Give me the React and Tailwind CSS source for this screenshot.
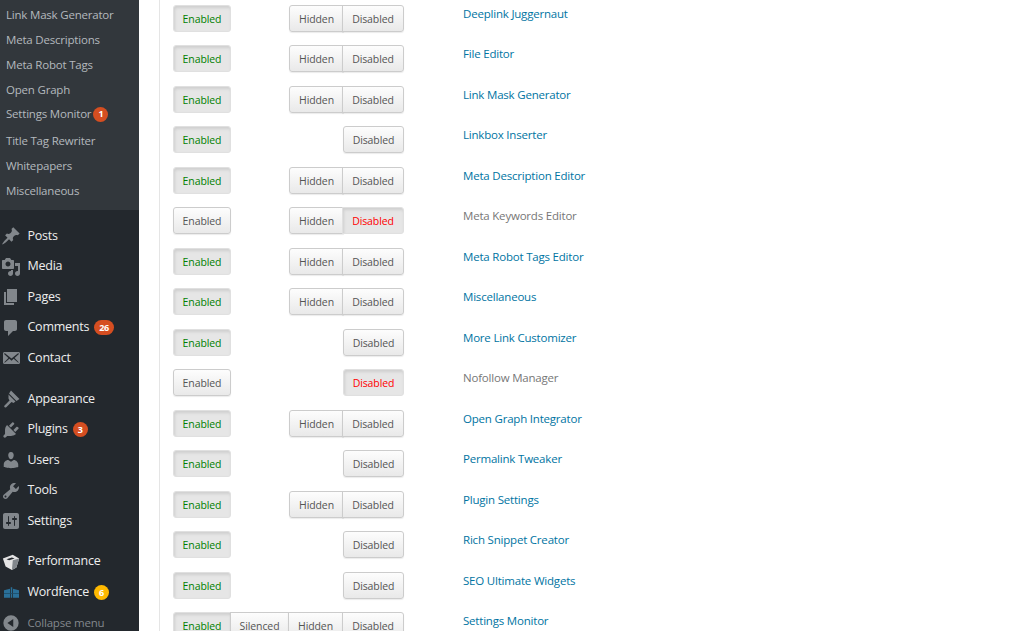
const subItems = [
  { label: 'Link Mask Generator' },
  { label: 'Meta Descriptions' },
  { label: 'Meta Robot Tags' },
  { label: 'Open Graph' },
  { label: 'Settings Monitor', badge: '1' },
  { label: 'Title Tag Rewriter' },
  { label: 'Whitepapers' },
  { label: 'Miscellaneous' },
];

// wp admin menu glyphs
const paths = {
  posts:
    'M10.44 3.02l1.82-1.82 6.36 6.35-1.83 1.82c-1.05-.68-2.48-.57-3.41.36l-.75.75c-.92.93-1.04 2.35-.35 3.41l-1.83 1.82-2.41-2.41-2.8 2.79c-.42.42-3.38 2.71-3.8 2.29s1.86-3.39 2.28-3.81l2.79-2.79L4.1 9.36l1.83-1.82c1.05.69 2.48.57 3.4-.36l.75-.75c.93-.92 1.05-2.35.36-3.41z',
  media:
    'M13 11V4c0-.55-.45-1-1-1h-1.67L9 1H5L3.67 3H2c-.55 0-1 .45-1 1v7c0 .55.45 1 1 1h10c.55 0 1-.45 1-1zM7 4.5c1.38 0 2.5 1.12 2.5 2.5S8.38 9.5 7 9.5 4.5 8.38 4.5 7 5.62 4.5 7 4.5zM14 6h5v10.5c0 1.38-1.12 2.5-2.5 2.5S14 17.88 14 16.5s1.12-2.5 2.5-2.5c.17 0 .34.02.5.05V9h-3V6zm-4 8.05V13h2v3.5c0 1.38-1.12 2.5-2.5 2.5S7 17.88 7 16.5 8.12 14 9.5 14c.17 0 .34.02.5.05z',
  pages: 'M6 15V2h10v13H6zm-1 1h8v2H3V5h2v11z',
  comments:
    'M5 2h9c1.1 0 2 .9 2 2v7c0 1.1-.9 2-2 2h-2l-5 5v-5H5c-1.1 0-2-.9-2-2V4c0-1.1.9-2 2-2z',
  contact:
    'M19 14.5v-9c0-.83-.67-1.5-1.5-1.5H3.49c-.83 0-1.5.67-1.5 1.5v9c0 .83.67 1.5 1.5 1.5H17.5c.83 0 1.5-.67 1.5-1.5zm-1.31-9.11c.33.33.15.67-.03.84L13.6 9.95l3.9 4.06c.12.14.2.36.06.51-.13.16-.43.15-.56.05l-4.37-3.73-2.14 1.95-2.13-1.95-4.37 3.73c-.13.1-.43.11-.56-.05-.14-.15-.06-.37.06-.51l3.9-4.06-4.06-3.72c-.18-.17-.36-.51-.03-.84s.67-.17.95.07l6.24 5.04 6.25-5.04c.28-.24.62-.4.95-.07z',
  appearance:
    'M10 1.5l8.5 8.5-3 2L8 4.5zM7.5 5.5l7 7-2 1.5-2-1-5 5c-1.5 1.5-3-.5-2-1.5l5-5-1-2z',
  plugins:
    'M13.11 4.36L9.87 7.6 8 5.73l3.24-3.24c.35-.34 1.05-.2 1.56.32.52.51.66 1.21.31 1.55zm-8 1.77l.91-1.12 9.01 9.01-1.19.84c-.71.71-2.63 1.16-3.82 1.16H6.14L4.9 17.26c-.59.59-1.54.59-2.12 0a1.5 1.5 0 0 1 0-2.12l1.24-1.24v-3.88c0-1.13.39-3.18 1.09-3.89zm7.26 3.97l3.24-3.24c.34-.35 1.04-.21 1.55.31.52.51.66 1.21.31 1.55l-3.24 3.25z',
  users:
    'M10 9.25c-2.27 0-2.73-3.44-2.73-3.44C7 4.02 7.82 2 9.97 2c2.16 0 2.98 2.02 2.71 3.81 0 0-.41 3.44-2.68 3.44zm0 2.57L12.72 10c2.39 0 4.52 2.33 4.52 4.53v2.49s-3.65 1.13-7.24 1.13c-3.65 0-7.24-1.13-7.24-1.13v-2.49c0-2.25 1.94-4.48 4.47-4.48z',
  tools:
    'M16.68 9.77c-1.34 1.34-3.3 1.67-4.95.99l-5.41 6.52c-.99.99-2.59.99-3.58 0s-.99-2.59 0-3.57l6.52-5.42c-.68-1.65-.35-3.61.99-4.95 1.28-1.28 3.12-1.62 4.72-1.06l-2.89 2.89 2.82 2.82 2.86-2.87c.53 1.58.18 3.39-1.08 4.65zM3.81 16.21c.4.39 1.04.39 1.43 0 .4-.4.4-1.04 0-1.43-.39-.4-1.03-.4-1.43 0a1.03 1.03 0 0 0 0 1.43z',
  settings:
    'M18 16V4c0-1.1-.9-2-2-2H4c-1.1 0-2 .9-2 2v12c0 1.1.9 2 2 2h12c1.1 0 2-.9 2-2zM8 11h1c.55 0 1 .45 1 1s-.45 1-1 1H8v1.5c0 .28-.22.5-.5.5s-.5-.22-.5-.5V13H6c-.55 0-1-.45-1-1s.45-1 1-1h1V5.5c0-.28.22-.5.5-.5s.5.22.5.5V11zm5-2h-1c-.55 0-1-.45-1-1s.45-1 1-1h1V5.5c0-.28.22-.5.5-.5s.5.22.5.5V7h1c.55 0 1 .45 1 1s-.45 1-1 1h-1v5.5c0 .28-.22.5-.5.5s-.5-.22-.5-.5V9z',
};

function Glyph({ name }) {
  return (
    <svg viewBox="0 0 20 20" className="w-[20px] h-[20px]" fill="currentColor">
      <path fillRule="evenodd" d={paths[name]} />
    </svg>
  );
}

function PerformanceIcon() {
  return (
    <svg viewBox="0 0 20 20" className="w-[18px] h-[18px]">
      <path d="M1 6l11-4 7 4-3 10-5 3-7-4z" fill="#e4e4e4" />
      <path d="M12 8l7-2-3 10-5 3z" fill="#82878c" />
      <path d="M5 7l6-2 3 1-6 2z" fill="#23282d" />
    </svg>
  );
}

function WordfenceIcon() {
  return (
    <svg viewBox="0 0 20 14" className="w-[15px] h-[11px]" fill="#2a7099">
      <path d="M0 4l8-2v12H0zM9 0h2v14H9zM12 2l8 2v10h-8z" />
      <path d="M0 8h20v1H0z" fill="#1d4a64" />
    </svg>
  );
}

function CollapseIcon() {
  return (
    <svg viewBox="0 0 20 20" className="w-[18px] h-[18px]" fill="currentColor">
      <path fillRule="evenodd" d="M10 1.5a8.5 8.5 0 1 1 0 17a8.5 8.5 0 0 1 0-17zM12.5 5.5L6 10l6.5 4.500z" />
    </svg>
  );
}

const menuGroups = [
  [
    { label: 'Posts', icon: <Glyph name="posts" /> },
    { label: 'Media', icon: <Glyph name="media" /> },
    { label: 'Pages', icon: <Glyph name="pages" /> },
    { label: 'Comments', icon: <Glyph name="comments" />, count: '26' },
    { label: 'Contact', icon: <Glyph name="contact" /> },
  ],
  [
    { label: 'Appearance', icon: <Glyph name="appearance" /> },
    { label: 'Plugins', icon: <Glyph name="plugins" />, count: '3' },
    { label: 'Users', icon: <Glyph name="users" /> },
    { label: 'Tools', icon: <Glyph name="tools" /> },
    { label: 'Settings', icon: <Glyph name="settings" /> },
  ],
  [
    { label: 'Performance', icon: <PerformanceIcon /> },
    { label: 'Wordfence', icon: <WordfenceIcon />, count: '6', amber: true },
  ],
];

const modules = [
  { name: 'Deeplink Juggernaut', hidden: true },
  { name: 'File Editor', hidden: true },
  { name: 'Link Mask Generator', hidden: true },
  { name: 'Linkbox Inserter' },
  { name: 'Meta Description Editor', hidden: true },
  { name: 'Meta Keywords Editor', hidden: true, off: true },
  { name: 'Meta Robot Tags Editor', hidden: true },
  { name: 'Miscellaneous', hidden: true },
  { name: 'More Link Customizer' },
  { name: 'Nofollow Manager', off: true },
  { name: 'Open Graph Integrator', hidden: true },
  { name: 'Permalink Tweaker' },
  { name: 'Plugin Settings', hidden: true },
  { name: 'Rich Snippet Creator' },
  { name: 'SEO Ultimate Widgets' },
  { name: 'Settings Monitor', hidden: true, silenced: true },
];

function Btn({ children, width, active, tone, first, last }) {
  const base =
    'h-[27px] pt-[3px] flex items-center justify-center text-[10.5px] tracking-[-0.1px] border shrink-0 ' + width + ' ';
  const look = active
    ? 'bg-[#e6e6e6] border-[#e0e0e0] shadow-[inset_1px_2px_3px_rgba(0,0,0,0.1)] '
    : 'bg-gradient-to-b from-[#fdfdfd] to-[#e9e9e9] border-[#ccc] shadow-[0_1px_1px_rgba(0,0,0,0.08)] text-[#555] ';
  const color = active ? (tone === 'red' ? 'text-[#f00] ' : 'text-[#008000] ') : '';
  const corners = (first ? 'rounded-l-[3px] ' : '-ml-px ') + (last ? 'rounded-r-[3px]' : '');
  return <div className={base + look + color + corners}>{children}</div>;
}

function ModuleRow({ mod }) {
  return (
    <div className="h-[40.5px] flex items-start">
      <div className="w-[71px] pl-[13px] flex shrink-0">
        <Btn width="w-[58px]" active={!mod.off} first last={!mod.silenced}>Enabled</Btn>
      </div>
      <div className="w-[58px] shrink-0 flex">
        {mod.silenced && <Btn width="w-[59px]">Silenced</Btn>}
      </div>
      <div className="w-[54px] shrink-0 flex">
        {mod.hidden && <Btn width="w-[55px]" first={!mod.silenced}>Hidden</Btn>}
      </div>
      <div className="w-[61px] shrink-0 flex">
        <Btn
          width={mod.hidden ? 'w-[62px]' : 'w-[61px]'}
          active={mod.off}
          tone="red"
          first={!mod.hidden}
          last
        >
          Disabled
        </Btn>
      </div>
      <a
        href="#"
        className={
          'ml-[59px] text-[11.5px] tracking-[-0.2px] leading-[18px] ' + (mod.off ? 'text-[#777]' : 'text-[#0074a2]')
        }
      >
        {mod.name}
      </a>
    </div>
  );
}

export default function App() {
  return (
    <div className="flex w-[1017px] h-[631px] overflow-hidden bg-white font-['Open_Sans',sans-serif]">
      <aside className="w-[139px] shrink-0 bg-[#23282d] flex flex-col">
        <div className="bg-[#32373c] h-[210px] shrink-0 pt-[2px] flex flex-col">
          {subItems.map((item) => (
            <div
              key={item.label}
              className={
                'shrink-0 pl-[6px] flex items-center text-[11.5px] tracking-[-0.2px] text-[#b4b9be] ' +
                (item.badge ? 'h-[26px] pb-[2px]' : 'h-[25px]')
              }
            >
              {item.label}
              {item.badge && (
                <span className="ml-[2px] w-[15px] h-[15px] rounded-full bg-[#d54e21] text-white text-[9px] font-bold flex items-center justify-center">
                  {item.badge}
                </span>
              )}
            </div>
          ))}
        </div>
        <div className="pt-[11px] flex flex-col gap-[10px]">
          {menuGroups.map((group, i) => (
            <div key={i} className={'flex flex-col ' + (i === 0 ? 'mb-[0.5px]' : '')}>
              {group.map((item) => (
                <div
                  key={item.label}
                  className="h-[30.5px] flex items-center text-[12.5px] tracking-[-0.25px] text-[#eee]"
                >
                  <span className="w-[27.5px] pl-px shrink-0 text-[#82878c]">
                    <span className="w-[20px] flex justify-center">{item.icon}</span>
                  </span>
                  <span>{item.label}</span>
                  {item.count && (
                    <span
                      className={
                        'ml-[5px] min-w-[15px] h-[15px] px-[5px] rounded-full text-white text-[9px] font-bold flex items-center justify-center ' +
                        (item.amber ? 'bg-[#ffb900]' : 'bg-[#d54e21]')
                      }
                    >
                      {item.count}
                    </span>
                  )}
                </div>
              ))}
            </div>
          ))}
          <div className="-mt-[10px] h-[30px] flex items-center text-[11.5px] tracking-[-0.2px] text-[#82878c]">
            <span className="w-[27.5px] pl-px shrink-0">
              <span className="w-[20px] flex justify-center"><CollapseIcon /></span>
            </span>
            <span>Collapse menu</span>
          </div>
        </div>
      </aside>
      <main className="flex-1 ml-[20px] border-l border-[#e5e5e5] pt-[4.75px] overflow-hidden">
        <div className="flex flex-col">
          {modules.map((mod) => (
            <ModuleRow key={mod.name} mod={mod} />
          ))}
        </div>
      </main>
    </div>
  );
}
